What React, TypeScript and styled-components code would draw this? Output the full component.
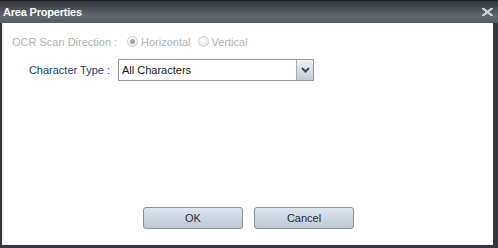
import React from 'react';
import styled, { createGlobalStyle } from 'styled-components';

const GlobalStyle = createGlobalStyle`
  html, body {
    margin: 0;
    padding: 0;
    background: #2e3135;
  }
  body {
    font-family: 'Liberation Sans', Arial, sans-serif;
  }
`;

const Window = styled.div`
  width: 498px;
  height: 248px;
  box-sizing: border-box;
  display: flex;
  flex-direction: column;
  background: #34373b;
`;

const TitleBar = styled.div`
  height: 23px;
  flex: 0 0 23px;
  display: flex;
  align-items: center;
  justify-content: space-between;
  padding: 0 5px 0 3px;
  box-sizing: border-box;
  background: linear-gradient(to bottom, #33363b 0%, #4a4f56 35%, #62686f 70%, #575c63 100%);
  border-top: 1px solid #1c1e21;
`;

const Title = styled.span`
  color: #ffffff;
  font-size: 11px;
  font-weight: bold;
  letter-spacing: -0.2px;
`;

const CloseButton = styled.span`
  display: flex;
  width: 12px;
  height: 10px;
  align-items: center;
  justify-content: center;
`;

const Body = styled.div`
  flex: 1;
  margin: 0 5px 3px 2px;
  background: #ffffff;
  display: flex;
  flex-direction: column;
  border-left: 2px solid #f3f3f3;
  border-bottom: 1px solid #efefef;
  padding: 10px 0 0 8px;
  box-sizing: border-box;
`;

const Row = styled.div<{ $gap: number }>`
  display: flex;
  align-items: center;
  gap: ${p => p.$gap}px;
  height: ${p => (p.$gap > 10 ? 17 : 22)}px;
  margin-bottom: 9px;
`;

const Label = styled.span<{ $disabled?: boolean; $width: number }>`
  width: ${p => p.$width}px;
  text-align: right;
  font-size: 11px;
  color: ${p => (p.$disabled ? '#b4b4b4' : '#24407a')};
  white-space: nowrap;
`;

const RadioGroup = styled.div`
  display: flex;
  align-items: center;
  gap: 4px;
`;

const RadioOption = styled.label`
  display: flex;
  align-items: center;
  gap: 3px;
  font-size: 11px;
  color: #b4b4b4;
  margin-right: 3px;
`;

const RadioCircle = styled.span<{ $checked?: boolean }>`
  width: 11px;
  height: 11px;
  box-sizing: border-box;
  border-radius: 50%;
  border: 1px solid #cfcfcf;
  background: radial-gradient(circle at 40% 35%, #ffffff 0%, #ececec 70%, #e0e0e0 100%);
  display: flex;
  align-items: center;
  justify-content: center;
  &::after {
    content: '';
    display: ${p => (p.$checked ? 'block' : 'none')};
    width: 5px;
    height: 5px;
    border-radius: 50%;
    background: #a4a4a4;
  }
`;

const Select = styled.div`
  width: 196px;
  height: 22px;
  box-sizing: border-box;
  border: 1px solid #9a9a9a;
  display: flex;
  align-items: stretch;
  background: #ffffff;
`;

const SelectText = styled.span`
  flex: 1;
  font-size: 11px;
  color: #1a1a1a;
  display: flex;
  align-items: center;
  padding-left: 3px;
`;

const SelectButton = styled.span`
  width: 16px;
  border-left: 1px solid #a8aeb6;
  background: linear-gradient(to bottom, #eef1f5 0%, #d4dae2 60%, #c4ccd6 100%);
  display: flex;
  align-items: center;
  justify-content: center;
`;

const Spacer = styled.div`
  flex: 1;
`;

const Footer = styled.div`
  display: flex;
  justify-content: center;
  gap: 11px;
  padding-right: 8px;
  margin-bottom: 15px;
`;

const Button = styled.button`
  width: 100px;
  height: 22px;
  border: 1px solid #8c9096;
  border-radius: 3px;
  background: linear-gradient(to bottom, #dfe6ee 0%, #cdd6e1 50%, #bfc9d5 100%);
  font-family: 'Liberation Sans', Arial, sans-serif;
  font-size: 11px;
  color: #2a2a2a;
  padding: 0;
  cursor: pointer;
`;

export default function App() {
  return (
    <>
      <GlobalStyle />
      <Window>
        <TitleBar>
          <Title>Area Properties</Title>
          <CloseButton>
            <svg width="11" height="8" viewBox="0 0 11 8">
              <path d="M1 0.5 L10 7.5 M10 0.5 L1 7.5" stroke="#d2d6db" strokeWidth="2.2" strokeLinecap="square" />
            </svg>
          </CloseButton>
        </TitleBar>
        <Body>
          <Row $gap={12}>
            <Label $disabled $width={103}>OCR Scan Direction :</Label>
            <RadioGroup>
              <RadioOption>
                <RadioCircle $checked />
                Horizontal
              </RadioOption>
              <RadioOption>
                <RadioCircle />
                Vertical
              </RadioOption>
            </RadioGroup>
          </Row>
          <Row $gap={8}>
            <Label $width={98}>Character Type :</Label>
            <Select>
              <SelectText>All Characters</SelectText>
              <SelectButton>
                <svg width="9" height="6" viewBox="0 0 9 6">
                  <path d="M1 1 L4.5 4.5 L8 1" stroke="#3f4650" strokeWidth="2" fill="none" />
                </svg>
              </SelectButton>
            </Select>
          </Row>
          <Spacer />
          <Footer>
            <Button>OK</Button>
            <Button>Cancel</Button>
          </Footer>
        </Body>
      </Window>
    </>
  );
}
